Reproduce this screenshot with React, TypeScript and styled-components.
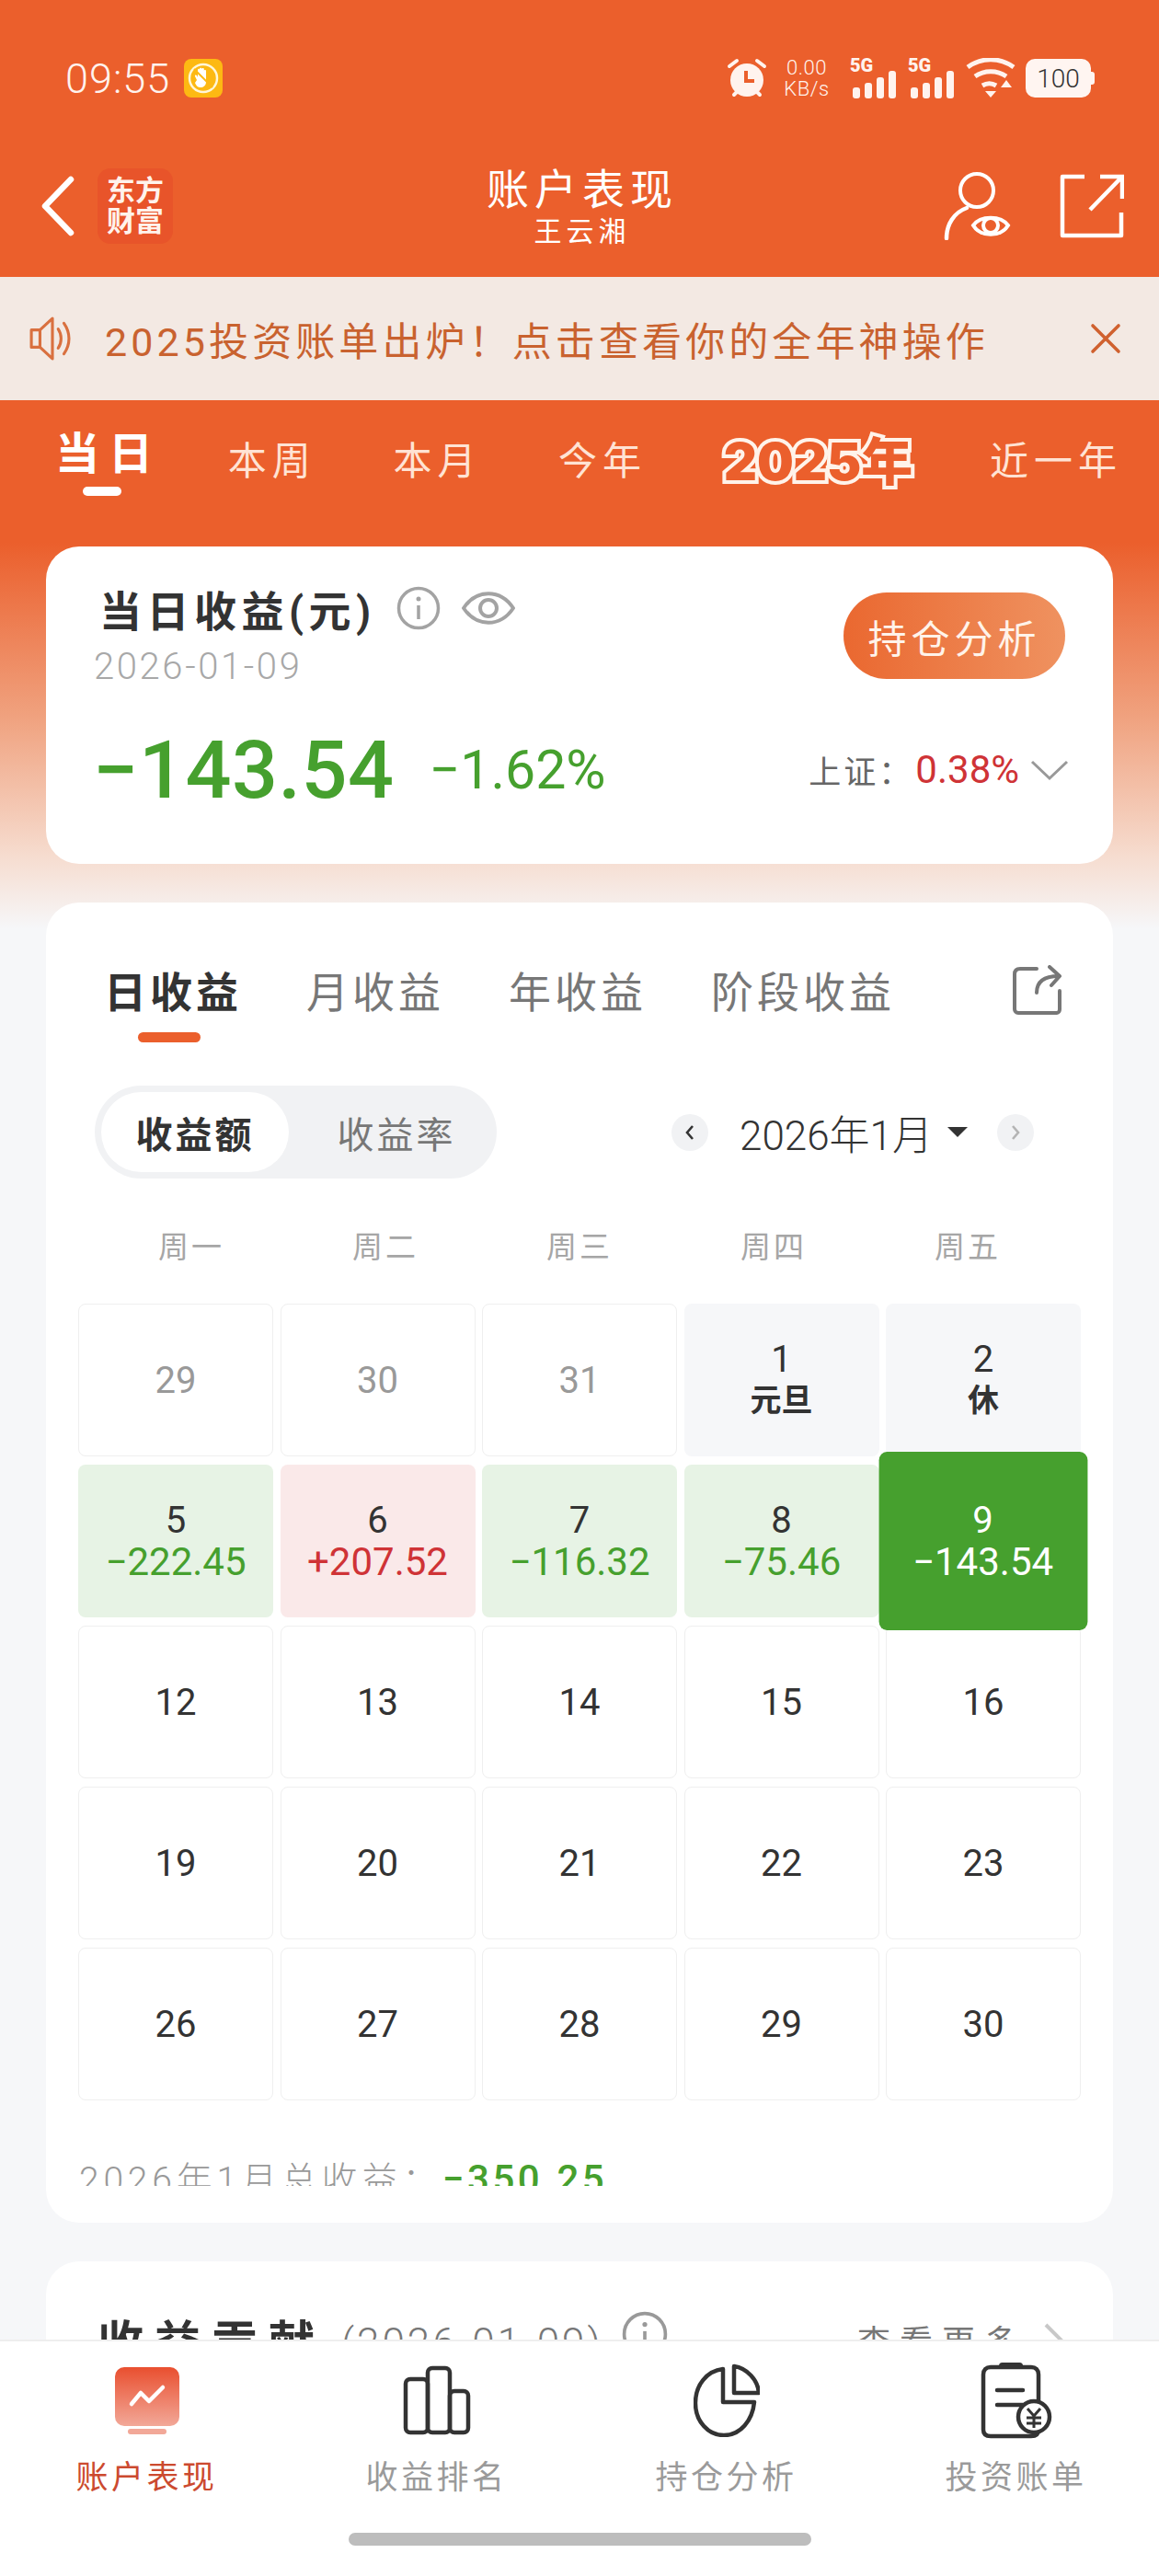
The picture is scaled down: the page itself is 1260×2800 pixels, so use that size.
import React from 'react'
import styled, { createGlobalStyle } from 'styled-components'

const ORANGE = '#eb5f2c'
const GREEN = '#46a02e'
const RED = '#cf3336'

const Global = createGlobalStyle`
  html, body { margin: 0; padding: 0; background: #f6f7f9; }
  * { box-sizing: border-box; }
  #root {
    height: 2800px;
    overflow: hidden;
    font-family: Roboto, "Noto Sans CJK SC", sans-serif;
  }
`

const Screen = styled.div`
  width: 1260px;
  height: 2800px;
  display: flex;
  flex-direction: column;
  overflow: hidden;
`

const Scroll = styled.div`
  flex: 1;
  min-height: 0;
  overflow: hidden;
  background: linear-gradient(180deg, ${ORANGE} 0, ${ORANGE} 590px, #f0a27f 780px, #f6dccf 930px, #f6f7f9 1010px);
`

const StatusBar = styled.div`
  height: 170px;
  padding: 0 70px 0 71px;
  display: flex;
  align-items: center;
  justify-content: space-between;
  color: #fff3ee;
`

const StatusGroup = styled.div`
  display: flex;
  align-items: center;
`

const Clock = styled.span`
  font-size: 45px;
  font-weight: 300;
  letter-spacing: 1px;
  margin-right: 15px;
`

const NetSpeed = styled.div`
  width: 56px;
  margin: 0 19px 0 15px;
  display: flex;
  flex-direction: column;
  align-items: center;
  font-size: 22px;
  line-height: 23px;
  font-weight: 300;
  letter-spacing: 0.5px;
`

const Signal = styled.div`
  position: relative;
  width: 50px;
  height: 44px;
  margin-right: 13px;
`

const SignalLabel = styled.span`
  position: absolute;
  left: 0;
  top: -4px;
  font-size: 20px;
  line-height: 24px;
  font-weight: 900;
`

const Battery = styled.div`
  position: relative;
  width: 71px;
  height: 42px;
  margin-left: 11px;
  margin-right: 4px;
  background: #fff5f1;
  border-radius: 10px;
  display: flex;
  align-items: center;
  justify-content: center;
  color: #333;
  font-size: 28px;
  font-weight: 300;

  &::after {
    content: '';
    position: absolute;
    right: -4px;
    top: 14px;
    width: 4px;
    height: 14px;
    border-radius: 0 3px 3px 0;
    background: #fff5f1;
  }
`

const NavBar = styled.div`
  height: 131px;
  padding: 0 38px 24px 44px;
  display: grid;
  grid-template-columns: 1fr auto 1fr;
  align-items: center;
  color: #fff;
`

const NavSide = styled.div<{ $end?: boolean }>`
  display: flex;
  align-items: center;
  justify-content: ${({ $end }) => ($end ? 'flex-end' : 'flex-start')};
  gap: ${({ $end }) => ($end ? '52px' : '24px')};
`

const Logo = styled.div`
  width: 82px;
  height: 82px;
  border-radius: 14px;
  background: #e8542a;
  display: flex;
  align-items: center;
  justify-content: center;
  text-align: center;
  font-size: 31px;
  line-height: 33px;
  font-weight: 700;
  color: #fff3ec;
`

const NavTitle = styled.div`
  text-align: center;
`

const NavMain = styled.div`
  font-size: 46px;
  line-height: 56px;
  letter-spacing: 6px;
`

const NavSub = styled.div`
  font-size: 30px;
  line-height: 36px;
  letter-spacing: 5px;
`

const Banner = styled.div`
  height: 134px;
  padding: 0 41px 0 32px;
  background: #f3e9e3;
  display: flex;
  align-items: center;
  color: #c9622f;
  font-size: 43px;
  letter-spacing: 4.1px;
`

const BannerText = styled.span`
  flex: 1;
  margin-left: 32px;
  white-space: nowrap;
`

const RangeTabs = styled.div`
  height: 159px;
  padding: 0 40px 34px 60px;
  display: flex;
  align-items: center;
  justify-content: space-between;
`

const RangeTab = styled.div<{ $active?: boolean }>`
  position: relative;
  color: ${({ $active }) => ($active ? '#fff' : '#ffe3d4')};
  font-size: ${({ $active }) => ($active ? '48px' : '42px')};
  font-weight: ${({ $active }) => ($active ? 700 : 400)};
  letter-spacing: ${({ $active }) => ($active ? '10px' : '6px')};
  white-space: nowrap;
  ${({ $active }) =>
    $active &&
    `
    margin-bottom: 18px;
    margin-right: -12px;
    &::after {
      content: '';
      position: absolute;
      left: 30px;
      bottom: -15px;
      width: 42px;
      height: 10px;
      border-radius: 5px;
      background: #fff;
    }
  `}
`

const YearTab = styled.div`
  color: ${ORANGE};
  font-size: 56px;
  font-weight: 900;
  font-family: Inter, "Noto Sans CJK SC", sans-serif;
  -webkit-text-stroke: 8px #fff3ea;
  paint-order: stroke fill;
  letter-spacing: 0;
  white-space: nowrap;
`

const Card = styled.div`
  background: #fff;
  border-radius: 36px;
  margin: 0 50px 42px;
`

const SummaryCard = styled(Card)`
  height: 345px;
  padding: 35px 48px 0 53px;
`

const SummaryTop = styled.div`
  display: flex;
  justify-content: space-between;
`

const SummaryHeading = styled.div`
  display: flex;
  align-items: center;
  gap: 22px;
  height: 64px;
  margin-left: 5px;
`

const SummaryTitle = styled.span`
  color: #333;
  font-size: 46px;
  font-weight: 700;
  letter-spacing: 5.5px;
`

const DateLine = styled.div`
  color: #a8a8a8;
  font-size: 40px;
  font-weight: 300;
  line-height: 46px;
  letter-spacing: 2.6px;
  margin: 9px 0 0 -1px;
`

const AnalyseButton = styled.div`
  width: 241px;
  height: 94px;
  margin: 15px 4px 0 0;
  border-radius: 47px;
  background: linear-gradient(90deg, #ea6830, #ef9260);
  color: #fff3ea;
  font-size: 42px;
  letter-spacing: 5px;
  display: flex;
  align-items: center;
  justify-content: center;
`

const SummaryBottom = styled.div`
  margin-top: 37px;
  display: flex;
  align-items: center;
`

const BigValue = styled.span`
  color: ${GREEN};
  font-size: 88px;
  font-weight: 500;
  letter-spacing: 0.5px;
  margin-left: -2px;
`

const Percent = styled.span`
  color: ${GREEN};
  font-size: 59px;
  font-weight: 400;
  margin-left: 38px;
  flex: 1;
`

const IndexLabel = styled.span`
  color: #666;
  font-size: 35px;
  letter-spacing: 3px;
`

const IndexValue = styled.span`
  color: ${RED};
  font-size: 42px;
  font-weight: 400;
  margin: 0 12px 0 2px;
`

const CalendarCard = styled(Card)`
  height: 1435px;
  padding: 0 35px;
`

const CalendarTabs = styled.div`
  padding: 60px 20px 0 28px;
  display: flex;
  align-items: flex-start;
`

const CalTab = styled.div<{ $active?: boolean }>`
  position: relative;
  height: 92px;
  margin-right: 70px;
  color: ${({ $active }) => ($active ? '#333' : '#777')};
  font-size: 46px;
  line-height: 76px;
  font-weight: ${({ $active }) => ($active ? 700 : 400)};
  letter-spacing: 4px;
  white-space: nowrap;
  ${({ $active }) =>
    $active &&
    `
    &::after {
      content: '';
      position: absolute;
      left: 37px;
      bottom: 0;
      width: 68px;
      height: 11px;
      border-radius: 6px;
      background: ${ORANGE};
    }
  `}
`

const ShareWrap = styled.div`
  margin-left: auto;
  margin-top: 8px;
`

const ToolRow = styled.div`
  margin-top: 47px;
  padding: 0 51px 0 18px;
  display: flex;
  align-items: center;
  justify-content: space-between;
`

const Segment = styled.div`
  width: 437px;
  height: 101px;
  padding: 7px;
  border-radius: 51px;
  background: #f1f2f4;
  display: flex;
  align-items: center;
`

const SegmentItem = styled.div<{ $active?: boolean }>`
  height: 87px;
  width: ${({ $active }) => ($active ? '204px' : '190px')};
  border-radius: 44px;
  background: ${({ $active }) => ($active ? '#fff' : 'transparent')};
  color: ${({ $active }) => ($active ? '#333' : '#777')};
  font-size: 40px;
  font-weight: ${({ $active }) => ($active ? 700 : 400)};
  letter-spacing: 3px;
  display: flex;
  align-items: center;
  justify-content: center;
  margin-left: ${({ $active }) => ($active ? '0' : '22px')};
`

const MonthPicker = styled.div`
  display: flex;
  align-items: center;
  color: #333;
  font-size: 44px;
  font-weight: 300;
`

const RoundButton = styled.div<{ $muted?: boolean }>`
  width: 40px;
  height: 40px;
  border-radius: 50%;
  background: #f1f2f4;
  display: flex;
  align-items: center;
  justify-content: center;
  color: ${({ $muted }) => ($muted ? '#b4b4b4' : '#333')};
`

const MonthLabel = styled.span`
  margin: 0 16px 0 34px;
  white-space: nowrap;
`

const Caret = styled.span`
  width: 0;
  height: 0;
  margin-right: 32px;
  border-left: 11px solid transparent;
  border-right: 11px solid transparent;
  border-top: 11px solid #333;
`

const WeekRow = styled.div`
  margin-top: 51px;
  height: 48px;
  display: grid;
  grid-template-columns: repeat(5, 211px);
  justify-content: center;
`

const WeekDay = styled.div`
  text-align: center;
  color: #a6a6a6;
  font-size: 33px;
  line-height: 48px;
  letter-spacing: 3px;
`

const Grid = styled.div`
  margin-top: 37px;
  display: grid;
  grid-template-columns: repeat(5, 212px);
  grid-auto-rows: 166px;
  column-gap: 7.5px;
  row-gap: 9px;
`

type CellKind = 'muted' | 'holiday' | 'gain' | 'loss' | 'plain' | 'selected'

const cellBackground: Record<CellKind, string> = {
  muted: '#fff',
  plain: '#fff',
  holiday: '#f6f7f9',
  gain: '#fae9e9',
  loss: '#e7f3e5',
  selected: GREEN,
}

const Cell = styled.div<{ $kind: CellKind }>`
  border-radius: 8px;
  background: ${({ $kind }) => cellBackground[$kind]};
  border: ${({ $kind }) => ($kind === 'muted' || $kind === 'plain' ? '1.5px solid #efefef' : 'none')};
  display: flex;
  flex-direction: column;
  align-items: center;
  justify-content: center;
  color: ${({ $kind }) => ($kind === 'muted' ? '#999' : $kind === 'selected' ? '#fff' : '#333')};
  font-size: 40px;
  line-height: 45px;
  font-weight: 400;
  ${({ $kind }) => $kind === 'selected' && 'transform: scale(1.07, 1.17); z-index: 1;'}
`

const CellInner = styled.div<{ $kind: CellKind }>`
  display: flex;
  flex-direction: column;
  align-items: center;
  ${({ $kind }) => $kind === 'selected' && 'transform: scale(0.935, 0.855);'}
`

const CellNote = styled.span<{ $tone: 'text' | 'up' | 'down' | 'white' }>`
  font-size: ${({ $tone }) => ($tone === 'text' ? '34px' : '42px')};
  white-space: nowrap;
  font-weight: ${({ $tone }) => ($tone === 'text' ? 700 : 400)};
  color: ${({ $tone }) =>
    $tone === 'up' ? RED : $tone === 'down' ? GREEN : $tone === 'white' ? '#fff' : '#333'};
`

const TotalLine = styled.div`
  margin-top: 63px;
  height: 30px;
  overflow: hidden;
  color: #999;
  font-size: 39px;
  line-height: 46px;
  font-weight: 300;
  letter-spacing: 4.8px;
  white-space: nowrap;
  margin-left: 1px;
`

const TotalValue = styled.span`
  color: ${GREEN};
  font-weight: 500;
  font-size: 42px;
  letter-spacing: 3.5px;
`

const ContributionCard = styled(Card)`
  height: 400px;
  padding: 54px 50px 0 56px;
  display: flex;
  align-items: flex-start;
  gap: 20px;
`

const ContributionTitle = styled.span`
  color: #333;
  font-size: 50px;
  line-height: 70px;
  font-weight: 700;
  letter-spacing: 12px;
  white-space: nowrap;
`

const ContributionDate = styled.span`
  color: #777;
  font-size: 44px;
  line-height: 70px;
  font-weight: 300;
  letter-spacing: 3px;
  margin-left: -3px;
`

const MoreLink = styled.span`
  margin-left: auto;
  color: #777;
  font-size: 36px;
  line-height: 70px;
  letter-spacing: 10px;
  display: flex;
  align-items: center;
  gap: 18px;
`

const TabBar = styled.div`
  height: 257px;
  flex-shrink: 0;
  background: #fff;
  border-top: 2px solid #eeeeee;
  padding-top: 24px;
  display: flex;
  flex-direction: column;
  align-items: center;
`

const TabItems = styled.div`
  width: 100%;
  padding-left: 2px;
  display: grid;
  grid-template-columns: repeat(4, 315px);
`

const TabItem = styled.div<{ $active?: boolean }>`
  display: flex;
  flex-direction: column;
  align-items: center;
  color: ${({ $active }) => ($active ? '#cc4a2f' : '#9a9a9a')};
  font-size: 35px;
  letter-spacing: 3.5px;
`

const TabIcon = styled.div`
  width: 80px;
  height: 80px;
  margin-bottom: 15px;
  display: flex;
  align-items: center;
  justify-content: center;
`

const HomeBar = styled.div`
  width: 503px;
  height: 14px;
  margin-top: 38px;
  border-radius: 7px;
  background: #bdbdbd;
`

const NoTouchIcon = () => (
  <svg width="42" height="42" viewBox="0 0 42 42">
    <rect width="42" height="42" rx="8" fill="#fdb913" />
    <circle cx="21" cy="21" r="15" fill="none" stroke="#fff6d8" strokeWidth="2.5" />
    <path
      d="M14 23l-2-4c-.5-1.5 1-2 2-1l1 2V12c0-1.6 2-1.6 2 0v-1c0-1.6 2.4-1.6 2.4 0v0c0-1.5 2.4-1.5 2.4 0v2c0-1.4 2.2-1.4 2.2 0v12c0 4-3 6-6 6s-5-2-6-5z"
      fill="#fff"
    />
    <path d="M11 11l20 20" stroke="#fdb913" strokeWidth="2" />
  </svg>
)

const AlarmIcon = () => (
  <svg width="44" height="44" viewBox="0 0 44 44">
    <circle cx="22" cy="24" r="18" fill="#fff3ee" />
    <path d="M21 14v11h9" fill="none" stroke={ORANGE} strokeWidth="4" />
    <path
      d="M3 9l8-6M41 9l-8-6M8 40l5-5M36 40l-5-5"
      stroke="#fff3ee"
      strokeWidth="4"
      strokeLinecap="round"
    />
  </svg>
)

const SignalBars = () => (
  <svg width="50" height="44" viewBox="0 0 50 44">
    <rect x="3" y="32" width="8" height="12" rx="3" fill="#fff3ee" />
    <rect x="16" y="27" width="8" height="17" rx="3" fill="#fff3ee" />
    <rect x="29" y="21" width="8" height="23" rx="3" fill="#fff3ee" />
    <rect x="42" y="14" width="8" height="30" rx="3" fill="#fff3ee" />
  </svg>
)

const WifiIcon = () => (
  <svg width="54" height="44" viewBox="0 0 54 44">
    <path d="M2 10c15-11 35-11 50 0M10 20c10-7 24-7 34 0M18 30c5-3 10-3 15 0" fill="none" stroke="#fff3ee" strokeWidth="5" />
    <path d="M21 36h12l-6 7zM38 32l6-8 6 8z" fill="#fff3ee" />
  </svg>
)

const BackIcon = () => (
  <svg width="38" height="66" viewBox="0 0 38 66">
    <path d="M33 4L5 33l28 29" fill="none" stroke="#fff" strokeWidth="6.5" strokeLinecap="round" strokeLinejoin="round" />
  </svg>
)

const WatchIcon = () => (
  <svg width="74" height="74" viewBox="0 0 74 74">
    <circle cx="36" cy="20" r="18" fill="none" stroke="#fff" strokeWidth="4" />
    <path d="M3 72c0-15 8-28 22-33" fill="none" stroke="#fff" strokeWidth="4.5" strokeLinecap="round" />
    <path d="M32 58c8-11 30-11 38 0c-8 13-30 13-38 0z" fill={ORANGE} stroke="#fff" strokeWidth="4" />
    <circle cx="51" cy="58" r="8" fill="none" stroke="#fff" strokeWidth="4" />
  </svg>
)

const ExternalIcon = () => (
  <svg width="70" height="70" viewBox="0 0 70 70">
    <path d="M27 3H3v64h64V42" fill="none" stroke="#fff" strokeWidth="4.5" strokeLinejoin="round" />
    <path d="M33 39L66 5M44 3h24v24" fill="none" stroke="#fff" strokeWidth="4.5" />
  </svg>
)

const SpeakerIcon = () => (
  <svg width="50" height="50" viewBox="0 0 48 48">
    <path d="M2 15h9L24 3v42L11 33H2zM11 15v18" fill="none" stroke="#d9703f" strokeWidth="3" strokeLinejoin="round" />
    <path d="M30 14c4 6 4 14 0 20M36 8c7 10 7 22 0 32" fill="none" stroke="#d9703f" strokeWidth="3" strokeLinecap="round" />
  </svg>
)

const CloseIcon = () => (
  <svg width="34" height="34" viewBox="0 0 34 34">
    <path d="M3 3l28 28M31 3L3 31" stroke="#d0612f" strokeWidth="3.6" strokeLinecap="round" />
  </svg>
)

const InfoIcon = ({ size = 48, color = '#a3a3a3' }: { size?: number; color?: string }) => (
  <svg width={size} height={size} viewBox="0 0 48 48">
    <circle cx="24" cy="24" r="21.5" fill="none" stroke={color} strokeWidth="3.5" />
    <circle cx="24" cy="14" r="2.5" fill={color} />
    <path d="M24 21v15" stroke={color} strokeWidth="3.5" />
  </svg>
)

const EyeIcon = () => (
  <svg width="60" height="48" viewBox="0 0 60 48">
    <path d="M3 24C17 3 43 3 57 24C43 45 17 45 3 24z" fill="none" stroke="#a3a3a3" strokeWidth="4" strokeLinejoin="round" />
    <circle cx="30" cy="24" r="9" fill="none" stroke="#a3a3a3" strokeWidth="4" />
  </svg>
)

const ChevronDown = () => (
  <svg width="42" height="24" viewBox="0 0 42 24">
    <path d="M2 3l19 18L40 3" fill="none" stroke="#999" strokeWidth="3" />
  </svg>
)

const ShareIcon = () => (
  <svg width="54" height="54" viewBox="0 0 54 54">
    <path d="M26 4H8C4 4 2 6 2 10v38c0 2 1.500 4 4 4h42c2 0 3-2 3-4V28" fill="none" stroke="#777" strokeWidth="4" strokeLinecap="round" />
    <path d="M26 30c0-12 8-18 24-18M40 2l11 10-9 10" fill="none" stroke="#777" strokeWidth="4" strokeLinecap="round" strokeLinejoin="round" />
  </svg>
)

const SmallChevron = ({ dir }: { dir: 'left' | 'right' }) => (
  <svg width="14" height="20" viewBox="0 0 14 20">
    <path d={dir === 'left' ? 'M10 3L4 10l6 7' : 'M4 3l6 7-6 7'} fill="none" stroke="currentColor" strokeWidth="2.6" />
  </svg>
)

const MoreChevron = () => (
  <svg width="26" height="46" viewBox="0 0 26 46">
    <path d="M3 3l20 20L3 43" fill="none" stroke="#c8c8c8" strokeWidth="4" />
  </svg>
)

const ScreenIcon = () => (
  <svg width="72" height="74" viewBox="0 0 72 74">
    <defs>
      <linearGradient id="screenFill" x1="0" y1="0" x2="0" y2="1">
        <stop offset="0" stopColor="#e94f2f" />
        <stop offset="1" stopColor="#f2a898" />
      </linearGradient>
    </defs>
    <rect x="1" y="1" width="70" height="64" rx="10" fill="url(#screenFill)" />
    <rect x="15" y="68" width="42" height="6" rx="3" fill="#f2a898" />
    <path d="M19 41l10-12 9 9 15-15" fill="none" stroke="#fff" strokeWidth="4.5" strokeLinecap="round" strokeLinejoin="round" />
  </svg>
)

const BarsIcon = () => (
  <svg width="74" height="76" viewBox="0 0 74 76">
    <g fill="none" stroke="#333" strokeWidth="4.500" strokeLinejoin="round">
      <rect x="3" y="15" width="24" height="58" rx="5" />
      <rect x="27" y="3" width="24" height="70" rx="5" />
      <rect x="51" y="28" width="20" height="45" rx="5" />
    </g>
  </svg>
)

const PieIcon = () => (
  <svg width="72" height="80" viewBox="0 0 72 80">
    <g fill="none" stroke="#333" strokeWidth="4.500" strokeLinejoin="round">
      <path d="M32 6C14 8 2 24 2 43c0 20 14 35 31 35 18 0 31-16 33-36H32z" />
      <path d="M44 3c14 2 26 15 27 29H44z" />
    </g>
  </svg>
)

const BillIcon = () => (
  <svg width="78" height="84" viewBox="0 0 78 84">
    <path d="M3 14c0-5 3-8 8-8h44c5 0 8 3 8 8v60c0 5-3 7-8 7H11c-5 0-8-2-8-7z" fill="none" stroke="#333" strokeWidth="4.500" />
    <rect x="20" y="1" width="26" height="7" rx="3.500" fill="#333" />
    <path d="M18 31h28M18 47h28" stroke="#333" strokeWidth="4.500" strokeLinecap="round" />
    <circle cx="58" cy="60" r="17" fill="#fff" stroke="#333" strokeWidth="4.500" />
    <path d="M51 51l7 8 7-8M50 61h16M50 67h16M58 59v13" fill="none" stroke="#333" strokeWidth="3" />
  </svg>
)

type Day = { day: string; kind: CellKind; note?: string; tone?: 'text' | 'up' | 'down' | 'white' }

const days: Day[] = [
  { day: '29', kind: 'muted' },
  { day: '30', kind: 'muted' },
  { day: '31', kind: 'muted' },
  { day: '1', kind: 'holiday', note: '元旦', tone: 'text' },
  { day: '2', kind: 'holiday', note: '休', tone: 'text' },
  { day: '5', kind: 'loss', note: '−222.45', tone: 'down' },
  { day: '6', kind: 'gain', note: '+207.52', tone: 'up' },
  { day: '7', kind: 'loss', note: '−116.32', tone: 'down' },
  { day: '8', kind: 'loss', note: '−75.46', tone: 'down' },
  { day: '9', kind: 'selected', note: '−143.54', tone: 'white' },
  ...['12', '13', '14', '15', '16', '19', '20', '21', '22', '23', '26', '27', '28', '29', '30'].map(
    (day): Day => ({ day, kind: 'plain' }),
  ),
]

const App = () => (
  <Screen>
    <Global />
    <Scroll>
      <StatusBar>
        <StatusGroup>
          <Clock>09:55</Clock>
          <NoTouchIcon />
        </StatusGroup>
        <StatusGroup>
          <AlarmIcon />
          <NetSpeed>
            <span>0.00</span>
            <span>KB/s</span>
          </NetSpeed>
          <Signal>
            <SignalLabel>5G</SignalLabel>
            <SignalBars />
          </Signal>
          <Signal>
            <SignalLabel>5G</SignalLabel>
            <SignalBars />
          </Signal>
          <WifiIcon />
          <Battery>100</Battery>
        </StatusGroup>
      </StatusBar>
      <NavBar>
        <NavSide>
          <BackIcon />
          <Logo>
            东方
            <br />
            财富
          </Logo>
        </NavSide>
        <NavTitle>
          <NavMain>账户表现</NavMain>
          <NavSub>王云湘</NavSub>
        </NavTitle>
        <NavSide $end>
          <WatchIcon />
          <ExternalIcon />
        </NavSide>
      </NavBar>
      <Banner>
        <SpeakerIcon />
        <BannerText>2025投资账单出炉！点击查看你的全年神操作</BannerText>
        <CloseIcon />
      </Banner>
      <RangeTabs>
        <RangeTab $active>当日</RangeTab>
        <RangeTab>本周</RangeTab>
        <RangeTab>本月</RangeTab>
        <RangeTab>今年</RangeTab>
        <YearTab>2025年</YearTab>
        <RangeTab>近一年</RangeTab>
      </RangeTabs>
      <SummaryCard>
        <SummaryTop>
          <div>
            <SummaryHeading>
              <SummaryTitle>当日收益(元)</SummaryTitle>
              <InfoIcon />
              <EyeIcon />
            </SummaryHeading>
            <DateLine>2026-01-09</DateLine>
          </div>
          <AnalyseButton>持仓分析</AnalyseButton>
        </SummaryTop>
        <SummaryBottom>
          <BigValue>−143.54</BigValue>
          <Percent>−1.62%</Percent>
          <IndexLabel>上证：</IndexLabel>
          <IndexValue>0.38%</IndexValue>
          <ChevronDown />
        </SummaryBottom>
      </SummaryCard>
      <CalendarCard>
        <CalendarTabs>
          <CalTab $active>日收益</CalTab>
          <CalTab>月收益</CalTab>
          <CalTab>年收益</CalTab>
          <CalTab>阶段收益</CalTab>
          <ShareWrap>
            <ShareIcon />
          </ShareWrap>
        </CalendarTabs>
        <ToolRow>
          <Segment>
            <SegmentItem $active>收益额</SegmentItem>
            <SegmentItem>收益率</SegmentItem>
          </Segment>
          <MonthPicker>
            <RoundButton>
              <SmallChevron dir="left" />
            </RoundButton>
            <MonthLabel>2026年1月</MonthLabel>
            <Caret />
            <RoundButton $muted>
              <SmallChevron dir="right" />
            </RoundButton>
          </MonthPicker>
        </ToolRow>
        <WeekRow>
          {['周一', '周二', '周三', '周四', '周五'].map(name => (
            <WeekDay key={name}>{name}</WeekDay>
          ))}
        </WeekRow>
        <Grid>
          {days.map((item, index) => (
            <Cell $kind={item.kind} key={index}>
              <CellInner $kind={item.kind}>
                <span>{item.day}</span>
                {item.note && <CellNote $tone={item.tone ?? 'text'}>{item.note}</CellNote>}
              </CellInner>
            </Cell>
          ))}
        </Grid>
        <TotalLine>
          2026年1月总收益：<TotalValue>−350.25</TotalValue>
        </TotalLine>
      </CalendarCard>
      <ContributionCard>
        <ContributionTitle>收益贡献</ContributionTitle>
        <ContributionDate>(2026-01-09)</ContributionDate>
        <InfoIcon size={50} color="#999" />
        <MoreLink>
          查看更多
          <MoreChevron />
        </MoreLink>
      </ContributionCard>
    </Scroll>
    <TabBar>
      <TabItems>
        <TabItem $active>
          <TabIcon>
            <ScreenIcon />
          </TabIcon>
          账户表现
        </TabItem>
        <TabItem>
          <TabIcon>
            <BarsIcon />
          </TabIcon>
          收益排名
        </TabItem>
        <TabItem>
          <TabIcon>
            <PieIcon />
          </TabIcon>
          持仓分析
        </TabItem>
        <TabItem>
          <TabIcon>
            <BillIcon />
          </TabIcon>
          投资账单
        </TabItem>
      </TabItems>
      <HomeBar />
    </TabBar>
  </Screen>
)

export default App
